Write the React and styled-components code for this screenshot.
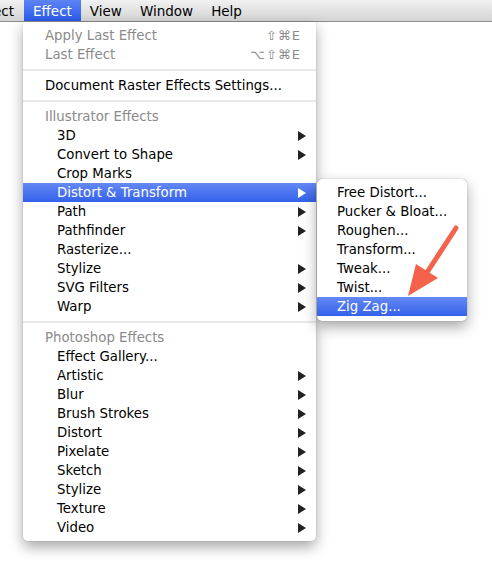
import React from "react";
import styled, { createGlobalStyle } from "styled-components";

const Global = createGlobalStyle`
  html, body {
    margin: 0;
    padding: 0;
    background: #fff;
  }
  body {
    font-family: "DejaVu Sans", "Liberation Sans", sans-serif;
    font-size: 13px;
    color: #000;
  }
`;

const Page = styled.div`
  position: relative;
  width: 492px;
  height: 564px;
  overflow: hidden;
  background: #fff;
`;

const MenuBar = styled.div`
  display: flex;
  align-items: stretch;
  height: 21px;
  background: linear-gradient(#f1f1f1, #d4d4d4);
  border-bottom: 1px solid #8e8e8e;
`;

const BarItem = styled.div`
  display: flex;
  align-items: center;
  padding: 0 ${(p) => p.$pad ?? 9}px;
  color: ${(p) => (p.$active ? "#fff" : "#000")};
  background: ${(p) =>
    p.$active ? "linear-gradient(#5d84f4, #2a5ae8)" : "transparent"};
  font-size: 13.5px;
`;

const BarTail = styled(BarItem)`
  width: 24px;
  box-sizing: border-box;
  justify-content: flex-end;
  overflow: hidden;
  padding: 0 10px 0 0;
`;

const Menu = styled.div`
  position: relative;
  width: 293px;
  margin-left: 23px;
  padding: 4px 0 4px;
  background: rgba(255, 255, 255, 0.98);
  border-radius: 0 0 5px 5px;
  box-shadow: 0 6px 14px rgba(0, 0, 0, 0.35), 0 0 1px rgba(0, 0, 0, 0.4);
`;

const Item = styled.div`
  display: flex;
  align-items: center;
  height: 19px;
  padding-left: ${(p) => (p.$indent ? 34 : 22)}px;
  padding-right: 10px;
  color: ${(p) => (p.$active ? "#fff" : p.$dim ? "#8a8a8a" : "#000")};
  background: ${(p) =>
    p.$active ? "linear-gradient(#6389f3, #3461ea)" : "transparent"};
  font-size: 13.3px;
  white-space: nowrap;
`;

const Label = styled.span`
  flex: 1;
`;

const Shortcut = styled.span`
  color: #8a8a8a;
  font-size: 13px;
  letter-spacing: 1px;
  padding-right: 5px;
`;

const Arrow = styled.span`
  width: 0;
  height: 0;
  border-top: 5px solid transparent;
  border-bottom: 5px solid transparent;
  border-left: 8px solid ${(p) => (p.$active ? "#fff" : "#222")};
`;

const Separator = styled.div`
  height: 12px;
  display: flex;
  align-items: center;
  &::after {
    content: "";
    flex: 1;
    height: 2px;
    background: #e8e8e8;
  }
`;

const SubMenu = styled.div`
  position: absolute;
  left: 294px;
  top: 157px;
  width: 150px;
  padding: 4px 0 5px;
  background: #fff;
  border-radius: 5px;
  box-shadow: 0 6px 14px rgba(0, 0, 0, 0.35), 0 0 1px rgba(0, 0, 0, 0.5);
`;

const SubItem = styled(Item)`
  padding-left: 20px;
`;

const Pointer = styled.svg`
  position: absolute;
  left: 400px;
  top: 222px;
`;

const illustrator = [
  ["3D", true],
  ["Convert to Shape", true],
  ["Crop Marks", false],
  ["Distort & Transform", true, true],
  ["Path", true],
  ["Pathfinder", true],
  ["Rasterize...", false],
  ["Stylize", true],
  ["SVG Filters", true],
  ["Warp", true],
];

const photoshop = [
  ["Effect Gallery...", false],
  ["Artistic", true],
  ["Blur", true],
  ["Brush Strokes", true],
  ["Distort", true],
  ["Pixelate", true],
  ["Sketch", true],
  ["Stylize", true],
  ["Texture", true],
  ["Video", true],
];

const distort = [
  "Free Distort...",
  "Pucker & Bloat...",
  "Roughen...",
  "Transform...",
  "Tweak...",
  "Twist...",
  "Zig Zag...",
];

const Group = ({ items }) =>
  items.map(([label, sub, active]) => (
    <Item key={label} $indent $active={active}>
      <Label>{label}</Label>
      {sub && <Arrow $active={active} />}
    </Item>
  ));

export default function App() {
  return (
    <Page>
      <Global />
      <MenuBar>
        <BarTail>ect</BarTail>
        <BarItem $active>Effect</BarItem>
        <BarItem>View</BarItem>
        <BarItem>Window</BarItem>
        <BarItem>Help</BarItem>
      </MenuBar>
      <Menu>
        <Item $dim>
          <Label>Apply Last Effect</Label>
          <Shortcut>⇧⌘E</Shortcut>
        </Item>
        <Item $dim>
          <Label>Last Effect</Label>
          <Shortcut>⌥⇧⌘E</Shortcut>
        </Item>
        <Separator />
        <Item>
          <Label>Document Raster Effects Settings...</Label>
        </Item>
        <Separator />
        <Item $dim>Illustrator Effects</Item>
        <Group items={illustrator} />
        <Separator />
        <Item $dim>Photoshop Effects</Item>
        <Group items={photoshop} />
        <SubMenu>
          {distort.map((label, i) => (
            <SubItem key={label} $active={i === distort.length - 1}>
              {label}
            </SubItem>
          ))}
        </SubMenu>
      </Menu>
      <Pointer width="70" height="80" viewBox="0 0 70 80">
        <line x1="56" y1="6" x2="26" y2="52" stroke="#f4624c" strokeWidth="5" strokeLinecap="round" />
        <polygon points="8,74 16,42 38,56" fill="#f4624c" />
      </Pointer>
    </Page>
  );
}
